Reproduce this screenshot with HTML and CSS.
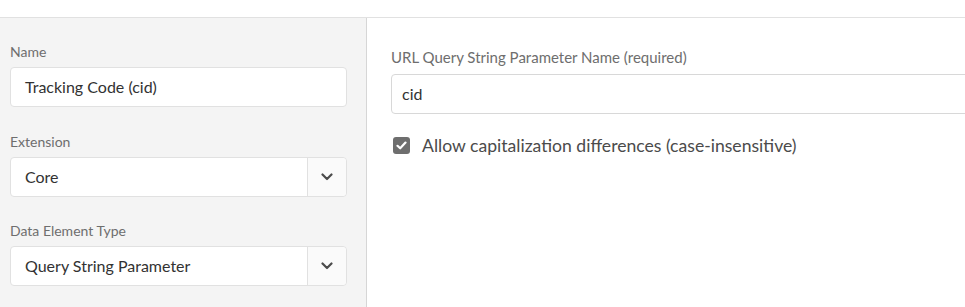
FILE: index.html
```html
<!DOCTYPE html>
<html lang="en">
<head>
  <meta charset="UTF-8">
  <title>Data Element</title>
  <link rel="stylesheet" href="styles.css">
</head>
<body>
  <div class="topbar"></div>
  <div class="main">
    <div class="sidebar">
      <div class="field first">
        <label>Name</label>
        <div class="textbox">Tracking Code (cid)</div>
      </div>
      <div class="field">
        <label>Extension</label>
        <div class="select">
          <span class="value">Core</span>
          <span class="toggle">
            <svg width="12" height="8" viewBox="0 0 12 8"><path d="M1.5 1.5 6 6l4.5-4.5" fill="none" stroke="#4b4b4b" stroke-width="2.2" stroke-linecap="round" stroke-linejoin="round"/></svg>
          </span>
        </div>
      </div>
      <div class="field">
        <label>Data Element Type</label>
        <div class="select">
          <span class="value">Query String Parameter</span>
          <span class="toggle">
            <svg width="12" height="8" viewBox="0 0 12 8"><path d="M1.5 1.5 6 6l4.5-4.5" fill="none" stroke="#4b4b4b" stroke-width="2.2" stroke-linecap="round" stroke-linejoin="round"/></svg>
          </span>
        </div>
      </div>
    </div>
    <div class="content">
      <label>URL Query String Parameter Name (required)</label>
      <div class="textbox wide">cid</div>
      <div class="check">
        <span class="box">
          <svg width="11" height="9" viewBox="0 0 11 9"><path d="M1.5 4.8 4.2 7.3 9.5 1.6" fill="none" stroke="#fff" stroke-width="2.2" stroke-linecap="round" stroke-linejoin="round"/></svg>
        </span>
        <span>Allow capitalization differences (case-insensitive)</span>
      </div>
    </div>
  </div>
</body>
</html>
```

FILE: styles.css
```css
* {
  box-sizing: border-box;
}
body {
  margin: 0;
  background: #fff;
  font-family: Lato, 'Liberation Sans', sans-serif;
  color: #323232;
}
.topbar {
  height: 18px;
  border-bottom: 1px solid #e1e1e1;
}
.main {
  display: flex;
  height: 289px;
}
.sidebar {
  width: 367px;
  flex-shrink: 0;
  padding: 25px 19px 0 10px;
  background: #f4f4f4;
  border-right: 1px solid #d6d6d6;
}
.field {
  margin-bottom: 25px;
}
.field.first {
  margin-bottom: 26px;
}
label {
  display: block;
  font-size: 14px;
  line-height: 18px;
  color: #6e6e6e;
  margin-bottom: 6px;
}
.textbox {
  height: 40px;
  line-height: 38px;
  border: 1px solid #e1e1e1;
  border-radius: 4px;
  background: #fff;
  padding-left: 14px;
  font-size: 16px;
}
.select {
  display: flex;
  height: 40px;
  border: 1px solid #e1e1e1;
  border-radius: 4px;
  background: #fff;
  font-size: 16px;
}
.select .value {
  flex: 1;
  line-height: 38px;
  padding-left: 14px;
}
.select .toggle {
  width: 39px;
  display: flex;
  align-items: center;
  justify-content: center;
  border-left: 1px solid #e1e1e1;
  background: #fafafa;
  border-radius: 0 4px 4px 0;
}
.content {
  flex: 1;
  overflow: hidden;
  padding: 30px 0 0 24px;
}
.content label {
  font-size: 15px;
  margin-bottom: 8px;
}
.textbox.wide {
  width: 600px;
  padding-left: 10px;
  border-color: #d8d8d8;
}
.check {
  display: flex;
  align-items: center;
  gap: 12px;
  margin-top: 21px;
  padding-left: 2px;
  font-size: 17.6px;
  color: #4b4b4b;
}
.check .box {
  width: 17px;
  height: 17px;
  border-radius: 3px;
  background: #6e6e6e;
  display: flex;
  align-items: center;
  justify-content: center;
}
```
